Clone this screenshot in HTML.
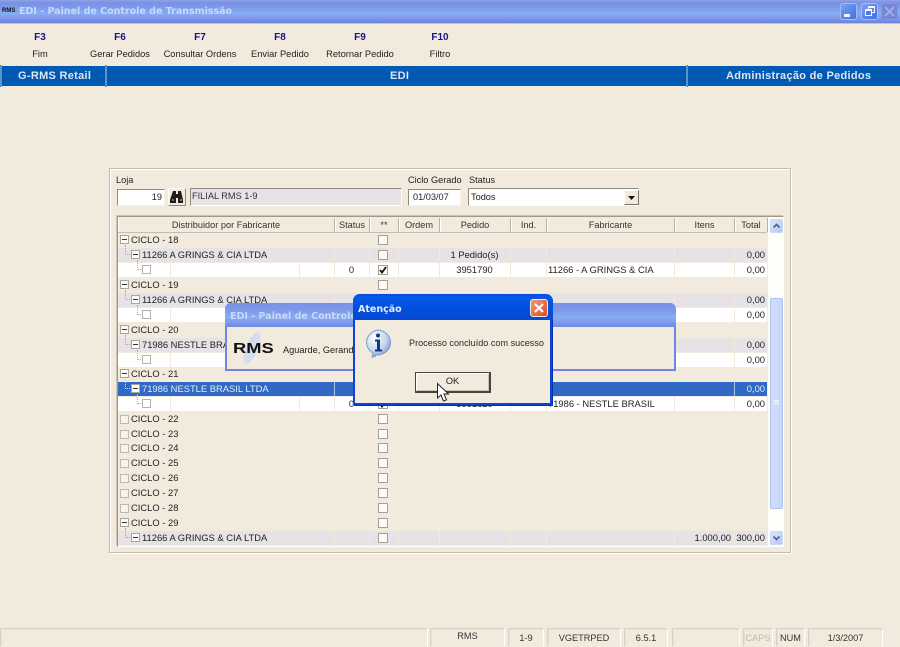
<!DOCTYPE html>
<html lang="pt" style="background:#F2EBDD"><head><meta charset="utf-8"><title>EDI - Painel de Controle de Transmissão</title>
<style>
html,body{margin:0;padding:0}
body{width:900px;height:647px;overflow:hidden;background:#F2EBDD;position:relative;font-family:"Liberation Sans",sans-serif;font-size:9.2px;color:#222;filter:blur(.3px)}
div,span{position:absolute;box-sizing:border-box;white-space:nowrap}
svg{position:absolute;overflow:visible}
.tb{height:14px;line-height:14px;text-align:center;width:80px}
.tb.k{top:31px;font-weight:bold;color:#14148C;font-size:10px}
.tb.l{top:47px;font-size:9.3px}
.bar{top:66px;height:20px;line-height:20px;color:#DCE6F2;font-weight:bold;font-size:11px;letter-spacing:.3px}
.ttl{height:15px;line-height:15px;font-family:"DejaVu Sans",sans-serif;font-size:9.5px;font-weight:bold;color:#CBD8F8}
.h{top:218px;height:14px;line-height:14px;text-align:center;color:#333;border-right:1px solid #B8B2A4;box-shadow:1px 0 0 #FFF inset}
.r{left:118px;width:649px;height:14px;line-height:14px;font-size:9.4px}
.g,.w,.s{background-image:linear-gradient(#F2EBDD,#F2EBDD),linear-gradient(#F2EBDD,#F2EBDD),linear-gradient(#F2EBDD,#F2EBDD),linear-gradient(#F2EBDD,#F2EBDD),linear-gradient(#F2EBDD,#F2EBDD),linear-gradient(#F2EBDD,#F2EBDD),linear-gradient(#F2EBDD,#F2EBDD),linear-gradient(#F2EBDD,#F2EBDD);background-size:1px 100%;background-repeat:no-repeat;background-position:216px 0,251px 0,280px 0,321px 0,392px 0,428px 0,556px 0,616px 0}
.g{background-color:#E6E2E6}
.w{background-color:#FFF;background-image:linear-gradient(#F2EBDD,#F2EBDD),linear-gradient(#F2EBDD,#F2EBDD),linear-gradient(#F2EBDD,#F2EBDD),linear-gradient(#F2EBDD,#F2EBDD),linear-gradient(#F2EBDD,#F2EBDD),linear-gradient(#F2EBDD,#F2EBDD),linear-gradient(#F2EBDD,#F2EBDD),linear-gradient(#F2EBDD,#F2EBDD),linear-gradient(#F2EBDD,#F2EBDD),linear-gradient(#F2EBDD,#F2EBDD);background-position:216px 0,251px 0,280px 0,321px 0,392px 0,428px 0,556px 0,616px 0,52px 0,181px 0}
.s{background-color:#316AC5;color:#E4ECFA;background-image:linear-gradient(#A9C0E8,#A9C0E8),linear-gradient(#A9C0E8,#A9C0E8);background-position:216px 0,616px 0;background-size:1px 100%}
.c0{left:13px}.c1{left:24px}
.num{right:2px;text-align:right}
.st{left:216px;width:35px;text-align:center}
.ped{left:321px;width:71px;text-align:center}
.fab{left:430px}
.cb{left:260px;top:2px;width:10px;height:10px;background:#FBFAF6;border:1px solid #A3A195}
.m{width:9px;height:9px;top:2px;border:1px solid #A8A69A;background:#FBFAF6}
.m:after{content:"";position:absolute;left:1px;top:3px;width:5px;height:1px;background:#333}
.e{width:9px;height:9px;top:3px;left:2px;border:1px solid #BDBAAE;background:#F7F3EA}
.lf{left:24px;top:2px;width:9px;height:9px;border:1px solid #B5B2A6;background:#FFF}
.d1{left:7px;top:-3px;width:7px;height:10px;border-left:1px dotted #A8A69A;border-bottom:1px dotted #A8A69A}
.d2{left:19px;top:-3px;width:6px;height:10px;border-left:1px dotted #B0AEA2;border-bottom:1px dotted #B0AEA2}
.sb{top:628px;height:19px;border:1px solid;border-color:#D8D3C4 #FFF #F2EBDD #D8D3C4;background:#F2EBDD;text-align:center;line-height:18px;font-size:9.2px;color:#333;box-shadow:inset 1px 0 0 #E6E0D0,inset 0 1px 0 #E6E0D0}
</style></head>
<body>
<!-- Title bar -->
<div style="left:0;top:0;width:900px;height:23px;background:linear-gradient(180deg,#8FA3EA 0,#7A90E4 12%,#7F9CEB 35%,#87ADF3 58%,#7B96E8 82%,#6E82DA 100%)"></div>
<div style="left:0;top:23px;width:900px;height:1px;background:#C9C4BA"></div>
<div style="left:2px;top:6px;width:14px;height:10px;font-size:6px;line-height:10px;font-weight:bold;color:#111">RMS</div>
<div class="ttl" style="left:19px;top:4px">EDI - Painel de Controle de Transmissão</div>
<div style="left:840px;top:3px;width:17px;height:17px;border-radius:3px;background:linear-gradient(135deg,#7C9FF4,#3E70E6);border:1px solid #A6BCF0"><div style="left:3px;top:10px;width:6px;height:3px;background:#F4F6FC"></div></div>
<div style="left:861px;top:3px;width:17px;height:17px;border-radius:3px;background:linear-gradient(135deg,#7C9FF4,#3E70E6);border:1px solid #A6BCF0"><div style="left:6px;top:2px;width:7px;height:7px;border:1px solid #F4F6FC;border-top-width:2px"></div><div style="left:3px;top:5px;width:7px;height:7px;border:1px solid #F4F6FC;border-top-width:2px;background:#4F7CE8"></div></div>
<div style="left:881px;top:3px;width:17px;height:17px;border-radius:3px;background:#7486D4;border:1px solid #8598E0"><svg width="15" height="15" style="left:0;top:0"><path d="M3 3 L12 12 M12 3 L3 12" stroke="#A0ADE2" stroke-width="2"/></svg></div>

<!-- Toolbar -->
<div class="tb k" style="left:0">F3</div><div class="tb l" style="left:0">Fim</div>
<div class="tb k" style="left:80px">F6</div><div class="tb l" style="left:80px">Gerar Pedidos</div>
<div class="tb k" style="left:160px">F7</div><div class="tb l" style="left:160px">Consultar Ordens</div>
<div class="tb k" style="left:240px">F8</div><div class="tb l" style="left:240px">Enviar Pedido</div>
<div class="tb k" style="left:320px">F9</div><div class="tb l" style="left:320px">Retornar Pedido</div>
<div class="tb k" style="left:400px">F10</div><div class="tb l" style="left:400px">Filtro</div>

<!-- Blue bar -->
<div style="left:0;top:66px;width:900px;height:20px;background:#0059B3"></div>
<div style="left:0;top:65px;width:2px;height:22px;background:#5E93C9"></div>
<div style="left:105px;top:65px;width:2px;height:22px;background:#5E93C9"></div>
<div style="left:686px;top:65px;width:2px;height:22px;background:#5E93C9"></div>
<div class="bar" style="left:18px">G-RMS Retail</div>
<div class="bar" style="left:390px">EDI</div>
<div class="bar" style="left:726px">Administração de Pedidos</div>

<!-- Panel -->
<div style="left:109px;top:168px;width:682px;height:385px;border:1px solid #C2BDB0;box-shadow:inset 1px 1px 0 #FFF,1px 1px 0 #FFF"></div>
<div style="left:116px;top:175px;height:11px;line-height:11px">Loja</div>
<div style="left:117px;top:189px;width:48px;height:17px;background:#FFF;border:1px solid;border-color:#8F8B7F #F6F2E8 #F6F2E8 #8F8B7F;text-align:right;padding-right:2px;line-height:15px">19</div>
<div style="left:168px;top:188px;width:18px;height:18px;background:#F2EBDD;border:1px solid;border-color:#FFF #8E897C #8E897C #FFF">
<svg width="16" height="16" style="left:0;top:0"><path d="M4 2h3v3h2V2h3l2 9v3H9V9H7v5H1v-3z" fill="#1C1C1C"/><path d="M3 11h2M11 11h2" stroke="#CFCFCF"/></svg></div>
<div style="left:190px;top:188px;width:212px;height:18px;background:#E6E2E6;border:1px solid;border-color:#8F8B7F #FFF #FFF #8F8B7F;padding-left:1px;line-height:14px;color:#333">FILIAL RMS 1-9</div>
<div style="left:408px;top:175px;height:11px;line-height:11px">Ciclo Gerado</div>
<div style="left:408px;top:189px;width:53px;height:17px;background:#FFF;border:1px solid;border-color:#8F8B7F #F6F2E8 #F6F2E8 #8F8B7F;padding-left:4px;line-height:15px">01/03/07</div>
<div style="left:469px;top:175px;height:11px;line-height:11px">Status</div>
<div style="left:468px;top:188px;width:171px;height:18px;background:#FFF;border:1px solid;border-color:#8F8B7F #FFF #FFF #8F8B7F;padding-left:2px;line-height:17px">Todos</div>
<div style="left:624px;top:190px;width:15px;height:15px;background:#F2EBDD;border:1px solid;border-color:#FFF #77736A #77736A #FFF"><svg width="13" height="13" style="left:0;top:0"><path d="M3 5h7l-3.5 4z" fill="#111"/></svg></div>

<!-- Grid -->
<div style="left:117px;top:216px;width:667px;height:331px;border:1px solid;border-color:#9E998C #FFF #FFF #9E998C;box-shadow:-1px -1px 0 #C9C4B6"></div>
<div style="left:118px;top:217px;width:649px;height:16px;background:#F2EBDD;border-bottom:1px solid #C2BDB0"></div>
<div class="h" style="left:118px;width:217px">Distribuidor por Fabricante</div>
<div class="h" style="left:335px;width:35px">Status</div>
<div class="h" style="left:370px;width:29px">**</div>
<div class="h" style="left:399px;width:41px">Ordem</div>
<div class="h" style="left:440px;width:71px">Pedido</div>
<div class="h" style="left:511px;width:36px">Ind.</div>
<div class="h" style="left:547px;width:128px">Fabricante</div>
<div class="h" style="left:675px;width:60px">Itens</div>
<div class="h" style="left:735px;width:33px">Total</div>

<div class="r" style="top:233px"><span class="m" style="left:2px"></span><span class="c0">CICLO - 18</span><span class="cb"></span></div>
<div class="r g" style="top:248px"><span class="d1"></span><span class="m" style="left:13px"></span><span class="c1">11266 A GRINGS &amp; CIA LTDA</span><span class="cb"></span><span class="ped">1 Pedido(s)</span><span class="num">0,00</span></div>
<div class="r w" style="top:263px"><span class="d2"></span><span class="lf"></span><span class="st">0</span><span class="cb" style="background:#FFF"><svg width="8" height="8" style="left:0;top:0"><path d="M1 4l2 2.5L7 1" fill="none" stroke="#111" stroke-width="1.8"/></svg></span><span class="ped">3951790</span><span class="fab">11266 - A GRINGS &amp; CIA</span><span class="num">0,00</span></div>
<div class="r" style="top:278px"><span class="m" style="left:2px"></span><span class="c0">CICLO - 19</span><span class="cb"></span></div>
<div class="r g" style="top:293px"><span class="d1"></span><span class="m" style="left:13px"></span><span class="c1">11266 A GRINGS &amp; CIA LTDA</span><span class="cb"></span><span class="num">0,00</span></div>
<div class="r w" style="top:308px"><span class="d2"></span><span class="lf"></span><span class="num">0,00</span></div>
<div class="r" style="top:323px"><span class="m" style="left:2px"></span><span class="c0">CICLO - 20</span></div>
<div class="r g" style="top:338px"><span class="d1"></span><span class="m" style="left:13px"></span><span class="c1">71986 NESTLE BRASIL LTDA</span><span class="num">0,00</span></div>
<div class="r w" style="top:353px"><span class="d2"></span><span class="lf"></span><span class="num">0,00</span></div>
<div class="r" style="top:367px"><span class="m" style="left:2px"></span><span class="c0">CICLO - 21</span></div>
<div class="r s" style="top:382px"><span class="d1" style="border-color:#D8E2F4"></span><span class="m" style="left:13px"></span><span class="c1">71986 NESTLE BRASIL LTDA</span><span class="num">0,00</span></div>
<div class="r w" style="top:397px"><span class="d2"></span><span class="lf"></span><span class="st">0</span><span class="cb" style="background:#FFF"><svg width="8" height="8" style="left:0;top:0"><path d="M1 4l2 2.5L7 1" fill="none" stroke="#111" stroke-width="1.8"/></svg></span><span class="ped">3951820</span><span class="fab">71986 - NESTLE BRASIL</span><span class="num">0,00</span></div>
<div class="r" style="top:412px"><span class="e"></span><span class="c0">CICLO - 22</span><span class="cb"></span></div>
<div class="r" style="top:427px"><span class="e"></span><span class="c0">CICLO - 23</span><span class="cb"></span></div>
<div class="r" style="top:441px"><span class="e"></span><span class="c0">CICLO - 24</span><span class="cb"></span></div>
<div class="r" style="top:456px"><span class="e"></span><span class="c0">CICLO - 25</span><span class="cb"></span></div>
<div class="r" style="top:471px"><span class="e"></span><span class="c0">CICLO - 26</span><span class="cb"></span></div>
<div class="r" style="top:486px"><span class="e"></span><span class="c0">CICLO - 27</span><span class="cb"></span></div>
<div class="r" style="top:501px"><span class="e"></span><span class="c0">CICLO - 28</span><span class="cb"></span></div>
<div class="r" style="top:516px"><span class="m" style="left:2px"></span><span class="c0">CICLO - 29</span><span class="cb"></span></div>
<div class="r g" style="top:531px"><span class="d1"></span><span class="m" style="left:13px"></span><span class="c1">11266 A GRINGS &amp; CIA LTDA</span><span class="cb"></span><span style="right:36px">1.000,00</span><span class="num">300,00</span></div>

<!-- Scrollbar -->
<div style="left:768px;top:217px;width:15px;height:329px;background:#FDFDFA"></div>
<div style="left:770px;top:219px;width:13px;height:14px;border-radius:2px;background:linear-gradient(135deg,#DCE6FC,#B4C8F6);border:1px solid #C9D6F5"><svg width="11" height="12" style="left:0;top:0"><path d="M2.5 7.5 L5.5 4.5 L8.5 7.5" fill="none" stroke="#4D6185" stroke-width="1.6"/></svg></div>
<div style="left:770px;top:298px;width:13px;height:211px;border-radius:2px;background:linear-gradient(90deg,#D0DCFB,#C6D6FA);border:1px solid #B0C2EE"></div>
<svg width="8" height="6" style="left:772px;top:400px"><path d="M1 .5h6M1 2.5h6M1 4.5h6" stroke="#EEF2FD"/></svg>
<div style="left:770px;top:531px;width:13px;height:14px;border-radius:2px;background:linear-gradient(135deg,#DCE6FC,#B4C8F6);border:1px solid #C9D6F5"><svg width="11" height="12" style="left:0;top:0"><path d="M2.5 4.5 L5.5 7.5 L8.5 4.5" fill="none" stroke="#4D6185" stroke-width="1.6"/></svg></div>

<!-- Background dialog -->
<div style="left:225px;top:303px;width:451px;height:68px;background:#F2EBDD;border:2px solid #7087E0;border-top:none;border-radius:6px 6px 0 0"></div>
<div style="left:225px;top:303px;width:451px;height:24px;border-radius:6px 6px 0 0;background:linear-gradient(180deg,#7A90E6 0,#7F9CEB 35%,#87ADF3 60%,#7288E2 100%)"></div>
<div class="ttl" style="left:230px;top:309px">EDI - Painel de Controle de Transmissão</div>
<svg width="24" height="34" style="left:240px;top:331px"><ellipse cx="12" cy="17" rx="6" ry="17" transform="rotate(22 12 17)" fill="#D4DDEE"/></svg>
<div style="left:233px;top:340px;height:18px;line-height:18px;font-size:15px;font-weight:bold;color:#111;transform:scaleX(1.22);transform-origin:left">RMS</div>
<div style="left:283px;top:343px;width:70px;overflow:hidden;height:14px;line-height:14px">Aguarde, Gerando Pedidos</div>

<!-- Foreground dialog -->
<div style="left:353px;top:294px;width:199px;height:111px;background:#F2EBDD;border:2px solid #0A45D6;border-top:none;border-radius:7px 7px 0 0;box-shadow:1px 1px 0 #0A2FA8"></div>
<div style="left:353px;top:294px;width:200px;height:26px;border-radius:7px 7px 0 0;background:linear-gradient(180deg,#0A4BD8 0,#0458E8 12%,#0052E0 45%,#0647D2 100%)"></div>
<div class="ttl" style="left:358px;top:302px;color:#E4ECFC">Atenção</div>
<div style="left:530px;top:299px;width:18px;height:18px;border-radius:3px;background:linear-gradient(135deg,#EE9A7C,#DC4A20);border:1px solid #F4E8E0"><svg width="16" height="16" style="left:0;top:0"><path d="M4 4 L12 12 M12 4 L4 12" stroke="#FFF" stroke-width="2.2"/></svg></div>
<svg width="30" height="30" style="left:364px;top:329px"><defs><radialGradient id="b" cx=".35" cy=".3" r=".8"><stop offset="0" stop-color="#FFF"/><stop offset=".6" stop-color="#C4D4EC"/><stop offset="1" stop-color="#6A8EC4"/></radialGradient></defs><path d="M14 1a13.500 12.500 0 1 1-2 25l-1 1.500-3 .5 1-4A13.500 12.500 0 0 1 14 1z" fill="url(#b)" stroke="#7E9CCB"/><circle cx="14" cy="6.500" r="2" fill="#0E3A8C"/><path d="M11 10.500h5v10h2v2h-7v-2h2v-8h-2z" fill="#0E3A8C"/></svg>
<div style="left:409px;top:336px;height:14px;line-height:14px;color:#2a2a2a;font-size:9.1px">Processo concluído com sucesso</div>
<div style="left:415px;top:372px;width:76px;height:21px;background:#F2EBDD;border:1px solid #45443E;border-right-width:2px;border-bottom-width:2px;box-shadow:inset 1px 1px 0 #FFF,inset -1px -1px 0 #C8C2B2;text-align:center;line-height:17px">OK</div>
<svg width="14" height="20" style="left:437px;top:383px"><path d="M.5 .5V15l3.500-3 2.500 6 3-1.200-2.500-5.800h4.500z" fill="#FFF" stroke="#222" stroke-width="1"/></svg>

<!-- Status bar -->
<div class="sb" style="left:0;width:428px"></div>
<div class="sb" style="left:430px;width:75px;line-height:14px">RMS</div>
<div class="sb" style="left:508px;width:36px">1-9</div>
<div class="sb" style="left:547px;width:74px">VGETRPED</div>
<div class="sb" style="left:624px;width:44px">6.5.1</div>
<div class="sb" style="left:672px;width:68px"></div>
<div class="sb" style="left:743px;width:30px;color:#BDB9AE">CAPS</div>
<div class="sb" style="left:776px;width:29px">NUM</div>
<div class="sb" style="left:808px;width:75px">1/3/2007</div>
</body></html>
